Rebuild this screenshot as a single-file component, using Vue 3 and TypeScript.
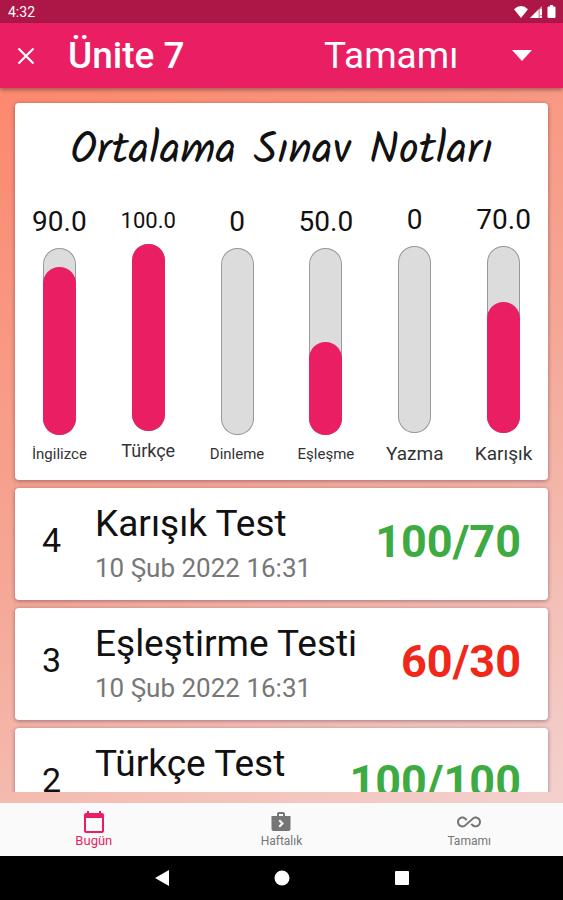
<script setup lang="ts">
import { ref } from 'vue'

interface Score {
  label: string
  value: string
  percent: number
  valueSize: string
  labelSize: string
}

interface Exam {
  no: number
  title: string
  date: string
  result: string
  passed: boolean
}

const period = ref('Tamamı')
const tab = ref('Bugün')

const scores: Score[] = [
  { label: 'İngilizce', value: '90.0', percent: 90, valueSize: 'v-lg', labelSize: 'l-sm' },
  { label: 'Türkçe', value: '100.0', percent: 100, valueSize: 'v-sm', labelSize: 'l-md' },
  { label: 'Dinleme', value: '0', percent: 0, valueSize: 'v-lg', labelSize: 'l-sm' },
  { label: 'Eşleşme', value: '50.0', percent: 50, valueSize: 'v-lg', labelSize: 'l-sm' },
  { label: 'Yazma', value: '0', percent: 0, valueSize: 'v-lg', labelSize: 'l-lg' },
  { label: 'Karışık', value: '70.0', percent: 70, valueSize: 'v-lg', labelSize: 'l-lg' },
]

const exams: Exam[] = [
  { no: 4, title: 'Karışık Test', date: '10 Şub 2022 16:31', result: '100/70', passed: true },
  { no: 3, title: 'Eşleştirme Testi', date: '10 Şub 2022 16:31', result: '60/30', passed: false },
  { no: 2, title: 'Türkçe Test', date: '', result: '100/100', passed: true },
]
</script>

<template>
  <div class="screen">
    <div class="status">
      <span>4:32</span>
      <div class="status-icons">
        <svg width="16" height="14" viewBox="0 0 16 14"><path d="M1 4.200Q8 -2.200 15 4.200L8 13Z" fill="#fff" /></svg>
        <svg width="12" height="14" viewBox="0 0 12 14">
          <path d="M12 1V13H0Z" fill="#fff" opacity=".55" />
          <path d="M8.500 4.500V13H0ZM10 4h2v6h-2zM10 11h2v2h-2z" fill="#fff" />
        </svg>
        <svg class="battery" width="9" height="14" viewBox="0 0 9 14"><path d="M3 0h3v1.500h1.500a1 1 0 0 1 1 1V12a1 1 0 0 1-1 1h-6a1 1 0 0 1-1-1V2.500a1 1 0 0 1 1-1H3Z" fill="#fff" /></svg>
      </div>
    </div>

    <header class="bar">
      <button class="close" type="button" aria-label="Kapat">
        <svg width="18" height="18" viewBox="0 0 18 18"><path d="M1.500 1.500l15 15M16.500 1.500l-15 15" stroke="#fff" stroke-width="2.200" /></svg>
      </button>
      <h1>Ünite 7</h1>
      <div class="picker">
        <select v-model="period" aria-label="Dönem">
          <option>Tamamı</option>
          <option>Haftalık</option>
          <option>Bugün</option>
        </select>
        <svg class="arrow" width="20" height="11" viewBox="0 0 20 11"><path d="M0 0h20L10 11Z" fill="#fff" /></svg>
      </div>
    </header>

    <main class="content">
      <section class="card summary">
        <h2>Ortalama Sınav Notları</h2>
        <div class="chart">
          <div v-for="s in scores" :key="s.label" class="column">
            <span :class="s.valueSize">{{ s.value }}</span>
            <div class="track">
              <div v-if="s.percent > 0" class="fill" :style="{ height: s.percent + '%' }"></div>
            </div>
            <span :class="s.labelSize">{{ s.label }}</span>
          </div>
        </div>
      </section>

      <article v-for="e in exams" :key="e.no" class="card exam">
        <span class="no">{{ e.no }}</span>
        <div class="info">
          <h3>{{ e.title }}</h3>
          <p>{{ e.date }}</p>
        </div>
        <strong :class="e.passed ? 'pass' : 'fail'">{{ e.result }}</strong>
      </article>
    </main>

    <nav class="tabs">
      <button type="button" :class="{ active: tab === 'Bugün' }" @click="tab = 'Bugün'">
        <svg width="24" height="24" viewBox="0 0 24 24"><path fill="currentColor" d="M20 3h-1V1h-2v2H7V1H5v2H4c-1.100 0-2 .9-2 2v16c0 1.100.9 2 2 2h16c1.100 0 2-.9 2-2V5c0-1.100-.9-2-2-2zm0 18H4V8h16v13z" /></svg>
        <span>Bugün</span>
      </button>
      <button type="button" :class="{ active: tab === 'Haftalık' }" @click="tab = 'Haftalık'">
        <svg width="24" height="24" viewBox="0 0 24 24"><path fill="currentColor" fill-rule="evenodd" d="M16 6V4c0-1.100-.9-2-2-2h-4c-1.100 0-2 .9-2 2v2H2.500v13c0 1.100.9 2 2 2h15c1.100 0 2-.9 2-2V6H16zm-6-2h4v2h-4V4zM11 17.500L9.500 16l2.500-2.500L9.500 11 11 9.500l4 4z" /></svg>
        <span>Haftalık</span>
      </button>
      <button type="button" :class="{ active: tab === 'Tamamı' }" @click="tab = 'Tamamı'">
        <svg width="24" height="24" viewBox="0 0 24 24"><path fill="currentColor" d="M18.600 6.620c-1.440 0-2.800.56-3.770 1.530L12 10.660 10.480 12h.01L7.800 14.390c-.64.64-1.490.99-2.400.99-1.870 0-3.390-1.510-3.390-3.380S3.530 8.620 5.400 8.620c.91 0 1.760.35 2.440 1.030l1.130 1 1.510-1.340L9.220 8.200C8.200 7.180 6.840 6.620 5.400 6.620 2.420 6.620 0 9.040 0 12s2.420 5.380 5.400 5.380c1.440 0 2.800-.56 3.770-1.530l2.830-2.500.01.010L13.520 12h-.01l2.690-2.390c.64-.64 1.490-.99 2.400-.99 1.870 0 3.390 1.510 3.390 3.380s-1.520 3.380-3.390 3.380c-.9 0-1.760-.35-2.440-1.030l-1.140-1.010-1.510 1.340 1.270 1.120c1.020 1.010 2.370 1.570 3.820 1.570 2.980 0 5.400-2.410 5.400-5.380s-2.420-5.370-5.400-5.370z" /></svg>
        <span>Tamamı</span>
      </button>
    </nav>

    <footer class="system">
      <button type="button" aria-label="Geri"><svg width="16" height="16" viewBox="0 0 16 16"><path d="M15 0v16L1 8Z" fill="#fff" /></svg></button>
      <button type="button" aria-label="Ana ekran"><svg width="16" height="16" viewBox="0 0 16 16"><circle cx="8" cy="8" r="7.500" fill="#fff" /></svg></button>
      <button type="button" aria-label="Son uygulamalar"><svg width="16" height="16" viewBox="0 0 16 16"><rect x="1" y="1" width="14" height="14" rx="1" fill="#fff" /></svg></button>
    </footer>
  </div>
</template>

<style>
body {
  margin: 0;
}
</style>

<style scoped>
* {
  box-sizing: border-box;
}

.screen {
  display: flex;
  flex-direction: column;
  height: 100vh;
  font-family: Roboto, "Liberation Sans", sans-serif;
  color: #111;
  background: linear-gradient(155deg, #fb8a70 10%, #f5a795 50%, #f3d0cc 90%);
}

button {
  padding: 0;
  border: 0;
  background: none;
  font: inherit;
  color: inherit;
}

svg {
  display: block;
}

h1,
h2,
h3,
p {
  margin: 0;
}

.status {
  display: flex;
  flex: none;
  align-items: center;
  justify-content: space-between;
  height: 23px;
  padding: 0 7px 0 8px;
  background: #ad1747;
  color: #fff;
  font-size: 14px;
}

.status-icons {
  display: flex;
  gap: 1px;
}

.battery {
  margin-left: 4px;
}

.bar {
  display: flex;
  flex: none;
  align-items: center;
  height: 65px;
  padding: 0 31px 0 17px;
  background: #e91e63;
  box-shadow: 0 2px 4px rgba(0, 0, 0, 0.35);
  color: #fff;
  z-index: 1;
}

h1 {
  flex: 1;
  margin-left: 33px;
  font-size: 37px;
  font-weight: 500;
}

.picker {
  display: grid;
  align-items: center;
  width: 208px;
}

.picker > * {
  grid-area: 1 / 1;
}

select {
  width: 100%;
  padding: 0;
  border: 0;
  appearance: none;
  background: none;
  color: inherit;
  font: inherit;
  font-size: 37px;
}

option {
  color: #111;
}

.arrow {
  justify-self: end;
  pointer-events: none;
}

.content {
  flex: 1;
  display: flex;
  flex-direction: column;
  gap: 8px;
  min-height: 0;
  margin-bottom: 11px;
  padding: 15px 15px 0;
  overflow: hidden;
}

.card {
  flex: none;
  border-radius: 4px;
  background: #fff;
  box-shadow: 0 1px 4px rgba(60, 20, 60, 0.45);
}

.summary {
  padding: 16px 0 15px;
}

h2 {
  font-family: Kalam, Lato, cursive;
  font-size: 44px;
  font-weight: 400;
  line-height: 64px;
  text-align: center;
}

.chart {
  display: grid;
  grid-template-columns: repeat(6, 1fr);
  align-items: center;
  margin-top: 20px;
}

.column {
  display: flex;
  flex-direction: column;
  align-items: center;
  gap: 10px;
}

.v-lg {
  font-size: 28px;
  line-height: 33px;
}

.v-sm {
  font-size: 22px;
  line-height: 26px;
}

.l-sm {
  font-size: 15px;
  line-height: 18px;
}

.l-md {
  font-size: 18px;
  line-height: 20px;
}

.l-lg {
  font-size: 19px;
  line-height: 22px;
}

.l-sm,
.l-md,
.l-lg {
  color: #333;
}

.track {
  display: flex;
  align-items: flex-end;
  width: 33px;
  height: 187px;
  border-radius: 17px;
  background: #dcdcdc;
  box-shadow: inset 0 0 0 1px #999;
}

.fill {
  width: 100%;
  border-radius: 17px;
  background: #e91e63;
}

.exam {
  display: flex;
  align-items: center;
  height: 112px;
  padding: 0 27px;
}

.no {
  width: 53px;
  font-size: 34px;
  line-height: 40px;
  margin-bottom: 8px;
}

.info {
  flex: 1;
}

h3 {
  font-size: 37px;
  font-weight: 400;
  line-height: 48px;
}

p {
  min-height: 40px;
  color: #777;
  font-size: 26px;
  line-height: 40px;
}

strong {
  margin-bottom: 6px;
  font-size: 45px;
  font-weight: 700;
}

.pass {
  color: #3daa42;
}

.fail {
  color: #f0281a;
}

.tabs {
  display: grid;
  flex: none;
  grid-template-columns: repeat(3, 1fr);
  height: 53px;
  background: #fafafa;
  color: #757575;
  font-size: 12px;
}

.tabs button {
  display: flex;
  flex-direction: column;
  align-items: center;
  justify-content: center;
  padding-bottom: 2px;
  line-height: 14px;
}

.tabs .active {
  color: #e91e63;
  font-size: 13px;
}

.system {
  display: flex;
  flex: none;
  align-items: center;
  justify-content: center;
  gap: 104px;
  height: 44px;
  background: #000;
}
</style>
